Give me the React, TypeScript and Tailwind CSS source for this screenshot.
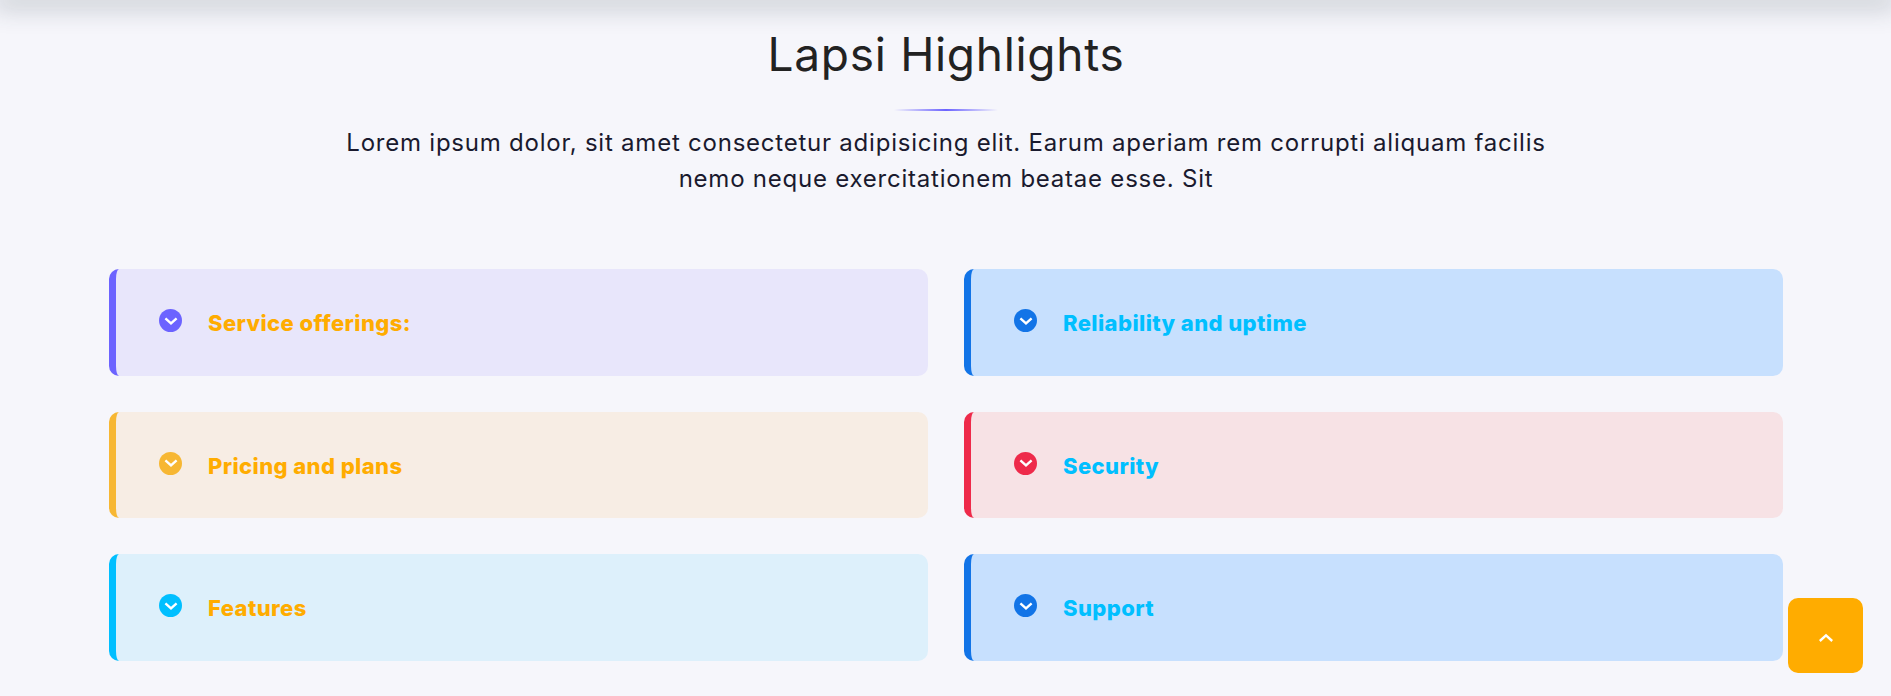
const font = "font-['Inter','Noto_Sans',sans-serif]";

const items = [
	{ title: "Service offerings:", card: "bg-[#e8e6fb] border-[#6c63ff]", icon: "bg-[#6c63ff]", text: "text-[#ffac00]" },
	{ title: "Reliability and uptime", card: "bg-[#c7e0fe] border-[#1274e7]", icon: "bg-[#1274e7]", text: "text-[#00bfff]" },
	{ title: "Pricing and plans", card: "bg-[#f7ede4] border-[#f7b733]", icon: "bg-[#f7b733]", text: "text-[#ffac00]" },
	{ title: "Security", card: "bg-[#f7e2e5] border-[#ee2a4a]", icon: "bg-[#ee2a4a]", text: "text-[#00bfff]" },
	{ title: "Features", card: "bg-[#ddf0fb] border-[#00bfff]", icon: "bg-[#00bfff]", text: "text-[#ffac00]" },
	{ title: "Support", card: "bg-[#c7e0fe] border-[#1274e7]", icon: "bg-[#1274e7]", text: "text-[#00bfff]" },
];

function Chevron({ up }: { up?: boolean }) {
	return (
		<svg width="14" height="14" viewBox="0 0 14 14" fill="none" stroke="white" strokeWidth="2.4" strokeLinecap="butt">
			<path d={up ? "M0.8 10 L7 4.4 L13.2 10" : "M1.4 4.4 L7 9.4 L12.6 4.4"} />
		</svg>
	);
}

export default function App() {
	return (
		<div className={`w-full h-[696px] overflow-hidden relative bg-[#f6f6fb] ${font}`}>
			<div className="h-0 w-full shadow-[0_0_26px_7px_rgba(40,60,70,0.3)]" />
			<section className="flex flex-col items-center pt-[24px] pl-[109px] pr-[108px]">
				<h2 className="text-[46px] leading-[60px] font-normal text-[#222222] tracking-[0.7px]">
					Lapsi Highlights
				</h2>
				<div className="mt-[25px] w-[104px] h-[2px] bg-gradient-to-r from-transparent via-[#6c63ff] to-transparent" />
				<p className="mt-[14px] w-[1220px] text-center text-[24px] leading-[36px] text-[#1a1a2e] font-normal tracking-[0.77px]">
					Lorem ipsum dolor, sit amet consectetur adipisicing elit. Earum aperiam rem corrupti aliquam facilis
					<br />
					nemo neque exercitationem beatae esse. Sit
				</p>
				<div className="mt-[72px] w-full grid grid-cols-2 gap-x-[36px] gap-y-[36px]">
					{items.map((item) => (
						<div
							key={item.title}
							className={`h-[106.5px] rounded-[10px] border-l-[7px] pl-[43px] flex items-center ${item.card}`}
						>
							<span className={`w-[23px] h-[23px] rounded-full flex items-center justify-center -mt-[3px] ${item.icon}`}>
								<Chevron />
							</span>
							<span className={`ml-[26px] mt-[2px] text-[22px] font-extrabold leading-[30px] tracking-[0.4px] ${item.text}`}>{item.title}</span>
						</div>
					))}
				</div>
			</section>
			<button className="fixed right-[28px] bottom-[23px] w-[75px] h-[75px] rounded-[10px] bg-[#ffac00] flex items-center justify-center">
				<span className="mt-[4px]">
					<Chevron up />
				</span>
			</button>
		</div>
	);
}
